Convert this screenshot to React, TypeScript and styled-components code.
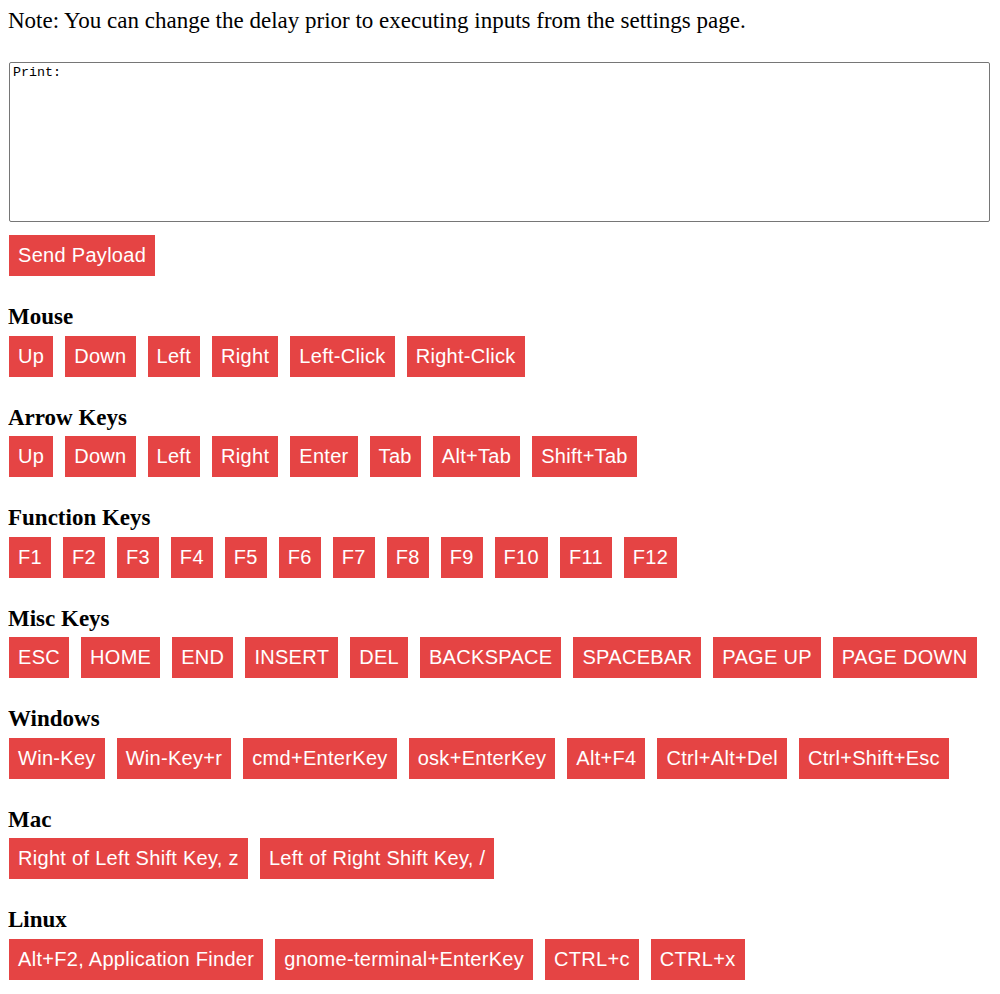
import React from 'react';
import styled, { createGlobalStyle } from 'styled-components';

const sections: { title: string; keys: string[] }[] = [
  { title: 'Mouse', keys: ['Up', 'Down', 'Left', 'Right', 'Left-Click', 'Right-Click'] },
  { title: 'Arrow Keys', keys: ['Up', 'Down', 'Left', 'Right', 'Enter', 'Tab', 'Alt+Tab', 'Shift+Tab'] },
  {
    title: 'Function Keys',
    keys: ['F1', 'F2', 'F3', 'F4', 'F5', 'F6', 'F7', 'F8', 'F9', 'F10', 'F11', 'F12'],
  },
  {
    title: 'Misc Keys',
    keys: ['ESC', 'HOME', 'END', 'INSERT', 'DEL', 'BACKSPACE', 'SPACEBAR', 'PAGE UP', 'PAGE DOWN'],
  },
  {
    title: 'Windows',
    keys: ['Win-Key', 'Win-Key+r', 'cmd+EnterKey', 'osk+EnterKey', 'Alt+F4', 'Ctrl+Alt+Del', 'Ctrl+Shift+Esc'],
  },
  { title: 'Mac', keys: ['Right of Left Shift Key, z', 'Left of Right Shift Key, /'] },
  {
    title: 'Linux',
    keys: ['Alt+F2, Application Finder', 'gnome-terminal+EnterKey', 'CTRL+c', 'CTRL+x'],
  },
];

const App: React.FC = () => {
  return (
    <>
      <GlobalStyle />
      <Page>
        <Note>Note: You can change the delay prior to executing inputs from the settings page.</Note>
        <Payload defaultValue="Print:" />
        <KeyButton>Send Payload</KeyButton>
        {sections.map((section) => (
          <Section key={section.title}>
            <Heading>{section.title}</Heading>
            <Row>
              {section.keys.map((key, i) => (
                <KeyButton key={i}>{key}</KeyButton>
              ))}
            </Row>
          </Section>
        ))}
      </Page>
    </>
  );
};

export default App;

// Styled Components
const GlobalStyle = createGlobalStyle`
  body {
    margin: 8px;
    background: #fff;
    color: #000;
    font-family: "Liberation Serif", "Times New Roman", serif;
  }
`;

const Page = styled.div`
  display: flex;
  flex-direction: column;
  align-items: flex-start;
`;

const Note = styled.div`
  font-size: 23px;
  line-height: 26.5px;
  margin-bottom: 27.5px;
`;

const Payload = styled.textarea`
  box-sizing: border-box;
  width: calc(100% - 3px);
  margin: 0 0 13px 1px;
  height: 160px;
  padding: 2px 3px;
  border: 1px solid #767676;
  border-radius: 2px;
  font-family: "Liberation Mono", "Courier New", monospace;
  font-size: 13.33px;
  resize: none;
  outline: none;
`;

const Section = styled.div`
  margin-top: 28px;
  display: flex;
  flex-direction: column;
`;

const Heading = styled.div`
  font-size: 23px;
  font-weight: bold;
  line-height: 26.5px;
  margin-bottom: 5px;
`;

const Row = styled.div`
  display: flex;
  flex-wrap: wrap;
  gap: 12px;
`;

const KeyButton = styled.button`
  margin-left: 1px;
  background: #e54444;
  color: #fff;
  border: none;
  padding: 9px 9px;
  font-family: "Liberation Sans", Arial, sans-serif;
  font-size: 20px;
  letter-spacing: 0.3px;
  line-height: 23px;
  cursor: pointer;
  white-space: nowrap;
  & + & {
    margin-left: 0;
  }
`;
